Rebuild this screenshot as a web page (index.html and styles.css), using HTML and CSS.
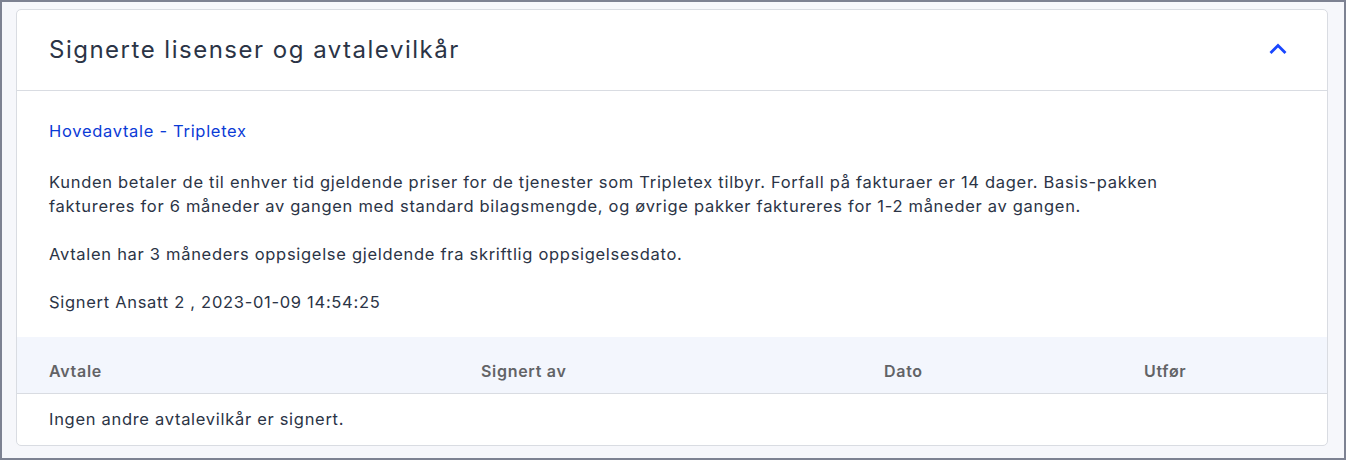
FILE: index.html
```html
<!DOCTYPE html>
<html lang="no">
<head>
<meta charset="utf-8">
<title>Signerte lisenser og avtalevilkår</title>
<link rel="stylesheet" href="styles.css">
</head>
<body>
<div class="frame">
  <section class="card">
    <header class="card-header">
      <h2 class="card-title">Signerte lisenser og avtalevilkår</h2>
      <button class="toggle" aria-label="Skjul">
        <svg width="18" height="12" viewBox="0 0 18 12"><path d="M2.5 10 L9 3.5 L15.5 10" fill="none" stroke="#1946ff" stroke-width="2.8" stroke-linecap="square" stroke-linejoin="miter"/></svg>
      </button>
    </header>
    <div class="card-body">
      <a class="agreement-link" href="#">Hovedavtale - Tripletex</a>
      <p class="text">Kunden betaler de til enhver tid gjeldende priser for de tjenester som Tripletex tilbyr. Forfall på fakturaer er 14 dager. Basis-pakken<br>faktureres for 6 måneder av gangen med standard bilagsmengde, og øvrige pakker faktureres for 1-2 måneder av gangen.</p>
      <p class="text">Avtalen har 3 måneders oppsigelse gjeldende fra skriftlig oppsigelsesdato.</p>
      <p class="text">Signert Ansatt 2 , 2023-01-09 14:54:25</p>
    </div>
    <div class="table">
      <div class="table-head">
        <div>Avtale</div>
        <div>Signert av</div>
        <div>Dato</div>
        <div>Utfør</div>
      </div>
      <div class="table-empty">Ingen andre avtalevilkår er signert.</div>
    </div>
  </section>
</div>
</body>
</html>
```
FILE: styles.css
```css
* { box-sizing: border-box; }
html, body {
  margin: 0;
  padding: 0;
}
body {
  font-family: Inter, "Noto Sans", sans-serif;
  color: #2b3446;
  background: #7d8292;
}
.frame {
  width: 1346px;
  height: 460px;
  border: 2px solid #7d8292;
  background: #f6f7fb;
  padding: 7px 16px 0 14px;
}
.card {
  background: #fff;
  border: 1px solid #d9dce2;
  border-radius: 5px;
  height: 437px;
  overflow: hidden;
}
.card-header {
  height: 81px;
  border-bottom: 1px solid #d9dce2;
  display: flex;
  align-items: center;
  justify-content: space-between;
  padding: 0 40px 0 32px;
}
.card-title {
  margin: 0;
  font-size: 24px;
  font-weight: 400;
  letter-spacing: 1.5px;
  color: #2b3446;
  padding-bottom: 1px;
}
.toggle {
  border: 0;
  background: none;
  padding: 0;
  display: flex;
  margin-bottom: 4px;
}
.card-body {
  padding: 28px 32px 23px;
  font-size: 16.5px;
  letter-spacing: 0.7px;
}
.agreement-link {
  display: block;
  color: #0b3bd6;
  text-decoration: none;
  line-height: 24px;
  margin-bottom: 27px;
}
.text {
  margin: 0 0 24px;
  line-height: 24px;
}
.text:last-child { margin-bottom: 0; }
.table-head {
  display: grid;
  grid-template-columns: 432px 403px 260px 1fr;
  background: #f3f6fd;
  border-bottom: 1px solid #d9dce2;
  padding: 24px 32px 12px;
  font-size: 16px;
  line-height: 20px;
  font-weight: 600;
  letter-spacing: 0.7px;
  color: #626366;
}
.table-empty {
  padding: 13px 32px;
  font-size: 16.5px;
  letter-spacing: 0.7px;
  line-height: 24px;
}
```
